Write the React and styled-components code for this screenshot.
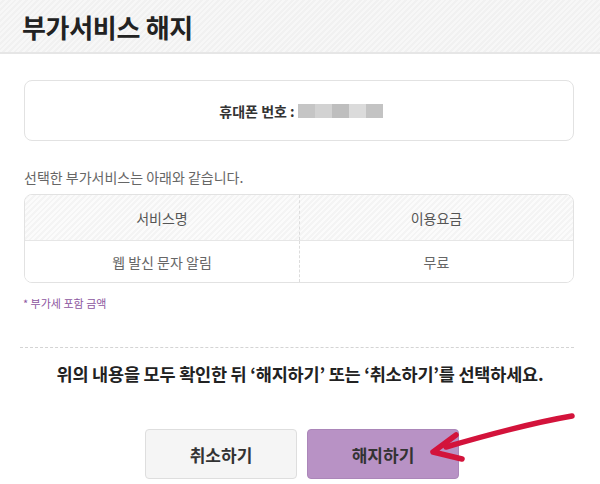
import React from "react";
import styled, { createGlobalStyle } from "styled-components";

const GlobalStyle = createGlobalStyle`
	html, body {
		margin: 0;
		padding: 0;
		background: #fff;
	}
	body {
		font-family: "Noto Sans CJK KR", "Noto Sans", sans-serif;
		color: #333;
	}
`;

const Page = styled.div`
	position: relative;
	width: 600px;
	height: 484px;
	overflow: hidden;
	background: #fff;
`;

const Header = styled.header`
	height: 52px;
	display: flex;
	align-items: center;
	padding-left: 22px;
	border-bottom: 2px solid #e6e6e6;
	background: repeating-linear-gradient(135deg, #f7f7f7 0 2px, #f1f1f1 2px 4px);

	& h1 {
		margin: 0;
		font-size: 26px;
		font-weight: 700;
		color: #222;
		letter-spacing: -0.3px;
	}
`;

const Content = styled.div`
	padding: 26px 26px 0 24px;
`;

const PhoneBox = styled.div`
	height: 59px;
	border: 1px solid #e2e2e2;
	border-radius: 8px;
	display: flex;
	align-items: center;
	justify-content: center;
	padding-left: 4px;
	font-size: 14px;
	font-weight: 700;
	color: #333;
`;

const Mosaic = styled.span`
	display: flex;
	margin-left: 3px;
	& > i {
		width: 17px;
		height: 14px;
	}
`;

const Notice = styled.p`
	margin: 27px 0 8px;
	font-size: 14px;
	line-height: 18px;
	color: #666;
`;

const Table = styled.div`
	border: 1px solid #e2e2e2;
	border-radius: 8px;
	overflow: hidden;
`;

const Row = styled.div`
	display: grid;
	grid-template-columns: 274px 1fr;
	height: ${props => props.height}px;
	background: ${props => props.head
		? "repeating-linear-gradient(135deg, #fbfbfb 0 2px, #f4f4f4 2px 4px)"
		: "#fff"};
	border-bottom: ${props => props.head ? "1px solid #e6e6e6" : "none"};
`;

const Cell = styled.div`
	display: flex;
	align-items: center;
	justify-content: center;
	font-size: 14px;
	color: ${props => props.head ? "#555" : "#666"};
	& + & {
		border-left: 1px dashed #dcdcdc;
	}
`;

const Footnote = styled.p`
	margin: 12px 0 0 -1px;
	font-size: 11px;
	line-height: 16px;
	color: #8d56a0;
`;

const Divider = styled.hr`
	margin: 36px 26px 0 20px;
	border: none;
	border-top: 1px dashed #d4d4d4;
`;

const Confirm = styled.p`
	margin: 14px 0 0;
	text-align: center;
	font-size: 17.5px;
	line-height: 24px;
	font-weight: 700;
	color: #222;
	letter-spacing: -0.2px;
`;

const Buttons = styled.div`
	display: flex;
	justify-content: center;
	gap: 10px;
	margin-top: 43px;
	padding-left: 4px;
`;

const Button = styled.button`
	width: 152px;
	height: 50px;
	border-radius: 4px;
	font-family: inherit;
	font-size: 17px;
	font-weight: 700;
	color: #333;
	background: ${props => props.primary ? "#b892c5" : "#f5f5f5"};
	border: 1px solid ${props => props.primary ? "#ab86b9" : "#dedede"};
`;

const Annotation = styled.svg`
	position: absolute;
	top: 0;
	left: 0;
	pointer-events: none;
`;

const blocks = ["#c5c5c5", "#d2d2d2", "#bebebe", "#dbdbdb", "#c3c3c3"];

const App = () => {
	return (
		<Page>
			<GlobalStyle />
			<Header>
				<h1>부가서비스 해지</h1>
			</Header>
			<Content>
				<PhoneBox>
					휴대폰 번호 :
					<Mosaic>
						{blocks.map((c, i) => <i key={i} style={{ background: c }} />)}
					</Mosaic>
				</PhoneBox>
				<Notice>선택한 부가서비스는 아래와 같습니다.</Notice>
				<Table>
					<Row head height={45}>
						<Cell head>서비스명</Cell>
						<Cell head>이용요금</Cell>
					</Row>
					<Row height={41}>
						<Cell>웹 발신 문자 알림</Cell>
						<Cell>무료</Cell>
					</Row>
				</Table>
				<Footnote>* 부가세 포함 금액</Footnote>
			</Content>
			<Divider />
			<Confirm>위의 내용을 모두 확인한 뒤 ‘해지하기’ 또는 ‘취소하기’를 선택하세요.</Confirm>
			<Buttons>
				<Button>취소하기</Button>
				<Button primary>해지하기</Button>
			</Buttons>
			<Annotation width="600" height="484" viewBox="0 0 600 484">
				<g fill="none" stroke="#d3133b" strokeLinecap="round" strokeLinejoin="round">
					<path d="M572 416 Q 525 424 446 447" strokeWidth="5.5" />
					<path d="M456 435 L 433 452 L 462 459" strokeWidth="5.5" />
				</g>
			</Annotation>
		</Page>
	);
};

export default App;
